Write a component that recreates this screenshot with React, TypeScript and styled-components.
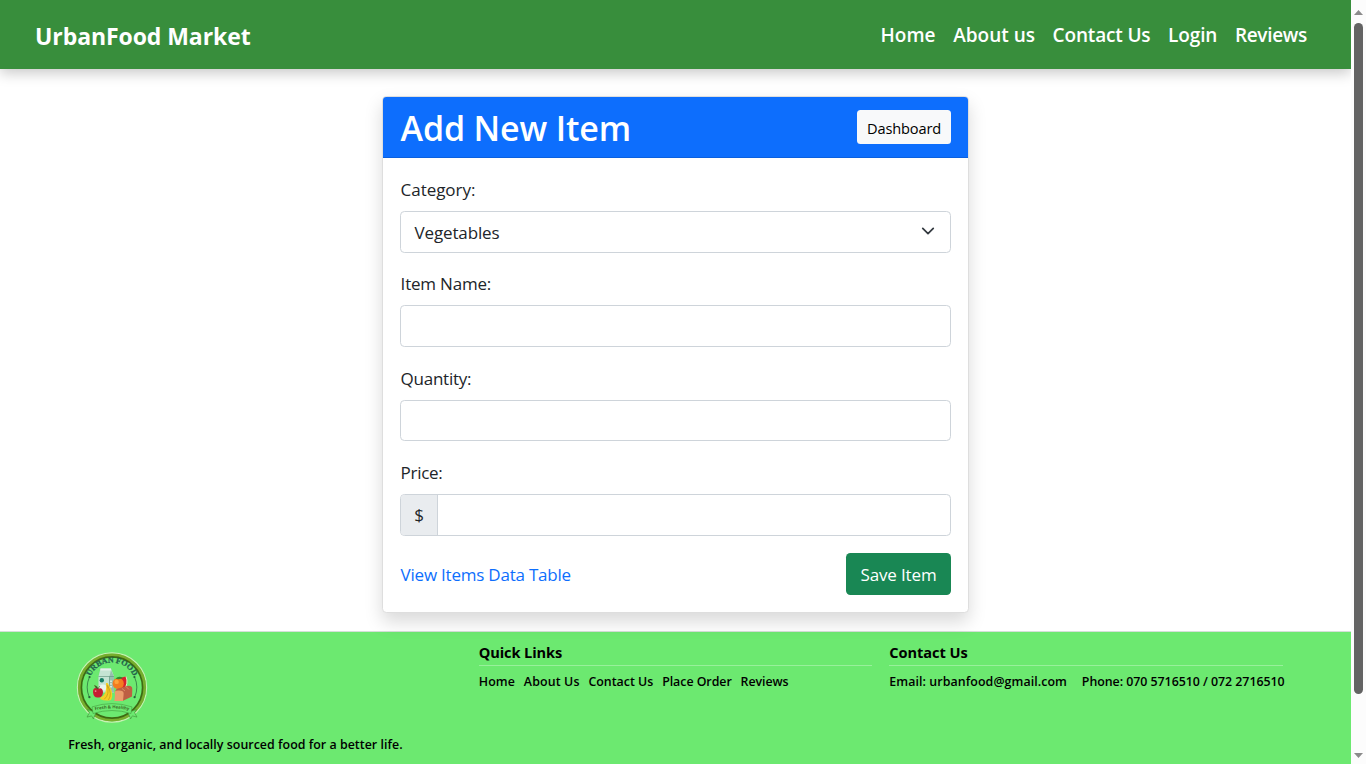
import React from "react";
import styled, { createGlobalStyle } from "styled-components";

const GlobalStyle = createGlobalStyle`
  *, *::before, *::after { box-sizing: border-box; }
  html, body { margin: 0; padding: 0; background: #fff; overflow: hidden; }
  body {
    font-family: "Open Sans", "Noto Sans", sans-serif;
    font-size: 17px;
    line-height: 26.4px;
    color: #212529;
  }
  h1, h2, h3, p { margin: 0; }
  a { text-decoration: none; color: inherit; }
`;

const Frame = styled.div`
  display: flex;
  width: 1366px;
  height: 764px;
  overflow: hidden;
`;

const Page = styled.div`
  display: flex;
  flex-direction: column;
  width: 1351px;
  overflow: hidden;
`;

const Navbar = styled.header`
  display: flex;
  flex: none;
  align-items: center;
  justify-content: space-between;
  height: 69px;
  padding: 0 44px 0 35px;
  background: #388e3c;
  color: #fff;
  box-shadow: 0 4px 13px rgba(0, 0, 0, 0.22);
`;

const Text = styled.span<{ $ls?: number }>`
  letter-spacing: ${(p) => p.$ls ?? 0}px;
  white-space: nowrap;
`;

const Brand = styled.a`
  font-size: 23px;
  font-weight: 700;
  line-height: 30px;
  padding-top: 3px;
`;

const NavLinks = styled.nav`
  display: flex;
  gap: 17.6px;
  font-size: 19px;
  font-weight: 600;
  line-height: 28px;
  padding-top: 1px;
`;

const Main = styled.main`
  display: flex;
  flex: none;
  justify-content: center;
  height: 562px;
  padding-top: 27px;
`;

const Card = styled.section`
  position: relative;
  width: 587px;
  height: 517.4px;
  border: 1px solid #dedede;
  border-radius: 4.4px;
  background: #fff;
  box-shadow: 0 8.8px 17.6px rgba(0, 0, 0, 0.15);
`;

const CardHeader = styled.div`
  display: flex;
  align-items: center;
  justify-content: space-between;
  height: 61px;
  padding: 0 17px 0 17.6px;
  border-bottom: 1px solid #0b60de;
  border-radius: 3.4px 3.4px 0 0;
  background: #0d6efd;
  color: #fff;
`;

const CardTitle = styled.h2`
  font-size: 34px;
  font-weight: 600;
  line-height: 42px;
  padding-top: 2px;
`;

const DashboardButton = styled.a`
  display: flex;
  align-items: center;
  justify-content: center;
  width: 94px;
  height: 34px;
  padding-top: 2px;
  border-radius: 3.5px;
  background: #f8f9fa;
  color: #000;
  font-size: 14.6px;
`;

const Form = styled.form`
  display: flex;
  flex-direction: column;
  padding: 17.6px 17px 17.6px 17.2px;
`;

const Field = styled.div`
  height: 94.4px;
`;

const Label = styled.label`
  display: block;
  height: 26.4px;
  margin-bottom: 8.8px;
  padding: 1.2px 0 0 0.4px;
`;

const Control = styled.div`
  height: 41.6px;
  border: 1px solid #ced4da;
  border-radius: 4.4px;
  background: #fff;
`;

const Select = styled(Control)`
  display: flex;
  align-items: center;
  justify-content: space-between;
  height: 42px;
  padding: 2px 15px 0 13.4px;

  svg {
    margin-bottom: 3px;
  }
`;

const InputGroup = styled(Control)`
  display: flex;
  overflow: hidden;
`;

const Addon = styled.span`
  display: flex;
  align-items: center;
  justify-content: center;
  width: 37px;
  padding-top: 1px;
  border-right: 1px solid #ced4da;
  background: #e9ecef;
`;

const Actions = styled.div`
  display: flex;
  align-items: center;
  justify-content: space-between;
`;

const TableLink = styled.a`
  color: #0d6efd;
  padding: 2px 0 0 0.4px;
`;

const SaveButton = styled.a`
  display: flex;
  align-items: center;
  justify-content: center;
  width: 105px;
  height: 41.6px;
  padding-top: 2px;
  border-radius: 4.4px;
  background: #198754;
  color: #fff;
`;

const Footer = styled.footer`
  display: grid;
  flex: none;
  grid-template-columns: repeat(3, 393.4px);
  column-gap: 17.2px;
  height: 133px;
  padding: 11px 0 0 68.2px;
  border-top: 1px solid #d5e0d8;
  background: #6ce970;
  color: #000;
  font-size: 12.4px;
  font-weight: 600;
  line-height: 20px;
`;

const Tagline = styled.p`
  margin-top: 3px;
`;

const FooterTitle = styled.h3`
  height: 23px;
  margin-bottom: 6px;
  border-bottom: 1px solid #98f09b;
  font-size: 14.6px;
  font-weight: 700;
  line-height: 19px;
`;

const FooterLinks = styled.div<{ $gap: number }>`
  display: flex;
  gap: ${(p) => p.$gap}px;
`;

const ScrollTrack = styled.div`
  display: flex;
  flex: none;
  flex-direction: column;
  align-items: center;
  width: 15px;
  padding: 10px 0 6px;
  background: #fcfcfc;
`;

const ScrollThumb = styled.div`
  width: 9px;
  height: 671px;
  margin: 8px 0 auto;
  border-radius: 4.5px;
  background: #636363;
`;

const ArrowIcon = styled.svg`
  display: block;
  width: 9px;
  height: 5px;
`;

const Arrow = ({ d }: { d: string }) => (
  <ArrowIcon viewBox="0 0 9 5">
    <path d={d} fill="#8b8b8b" />
  </ArrowIcon>
);

const LogoImage = styled.svg`
  display: block;
  width: 88px;
  height: 88px;
  margin-top: 1px;
`;

const Logo = () => (
  <LogoImage viewBox="-44 -43.5 88 88">
    <defs>
      <path id="arcTop" d="M-23 -3A23 22 0 0 1 23 -3" />
      <path id="arcBanner" d="M-19 23.2Q0 18.6 19 23.2" />
    </defs>
    <circle r="34.6" fill="none" stroke="#c9f0b4" strokeWidth="1.2" />
    <circle r="32.6" fill="none" stroke="#78ad2d" strokeWidth="3" />
    <circle r="30.6" fill="none" stroke="#3d6a12" strokeWidth="1.7" />
    <g fill="none" stroke="#2f7440" strokeWidth="0.8">
      <path d="M-22.6 -10.3A25 25 0 0 0 -22.8 9.5" />
      <path d="M22.6 -10.3A25 25 0 0 1 22.8 9.5" />
    </g>
    <g fill="#285f3a">
      <circle cx="-22.4" cy="-10.5" r="1.1" />
      <circle cx="22.4" cy="-10.5" r="1.1" />
      <circle cx="-22.6" cy="9.7" r="1.1" />
      <circle cx="22.6" cy="9.7" r="1.1" />
    </g>
    <text
      fill="#23634a"
      stroke="#23634a"
      strokeWidth="0.25"
      fontFamily="'Liberation Serif', serif"
      fontSize="8"
      fontWeight="700"
      textAnchor="middle"
    >
      <textPath href="#arcTop" startOffset="50%">
        URBAN FOOD
      </textPath>
    </text>
    {/* milk carton */}
    <path d="M-11.5 -19H-1L2 -11V5H-13.5V-11Z" fill="#c4e3d3" />
    <path d="M-11.5 -19H-1V-17H-11.5Z" fill="#e4efe9" />
    <path d="M-13.5 -11H-2.5L-1 -17.5L2 -11V5H-2.5V-11" fill="#97bfae" />
    <path d="M-13.5 -11H2M-2.5 -11V4" stroke="#5c8e7b" strokeWidth="0.6" fill="none" />
    <circle cx="-10.2" cy="-7.3" r="2.2" fill="#147d64" />
    <path d="M-12.8 -2Q-9 -4 -5 -1.5V3H-12.8Z" fill="#e8f5ee" />
    <path d="M-1 -7V0" stroke="#e8f5ee" strokeWidth="1.5" strokeDasharray="1.5 1.2" />
    {/* watermelon slice and orange */}
    <path d="M5 -9L14 -11Q16.5 -4 12 2L4 0Z" fill="#d9202b" />
    <path d="M14 -11Q16.8 -4 12 2" stroke="#e9e4c0" strokeWidth="1" fill="none" />
    <circle cx="6.2" cy="-4" r="5.6" fill="#f47b20" />
    <circle cx="4.6" cy="-5.6" r="2.2" fill="#ffa43a" />
    <path d="M3.5 -9Q7 -12 11 -9.5Q7 -7.5 3.5 -9Z" fill="#2f8a2d" />
    {/* bread */}
    <path d="M3.5 4Q3 1 8 0.5L15 -1.5Q20.5 -2.5 20.3 2L20 9L10.5 13.5H3Z" fill="#bd5f43" />
    <path d="M2.4 13.6L3 7Q1.5 3.2 6 3Q12.5 2.6 11.6 7L11 13.6Z" fill="#eb9d6b" />
    <path d="M10 1L13 3.5M14 -1L17 2" stroke="#dc8a66" strokeWidth="1" />
    {/* apple */}
    <path d="M-14 1.2Q-19 -1 -19 4.8Q-18.3 10.5 -14 10Q-9.5 10.5 -9 4.8Q-9.4 -0.8 -14 1.2Z" fill="#c51d32" />
    <path d="M-14 1.4Q-14.6 -1.4 -17.4 -2Q-16.6 0.6 -14 1.4L-12.2 -1.6" fill="#2c6b2a" stroke="#4d421d" strokeWidth="0.6" />
    <circle cx="-16.4" cy="3.6" r="0.9" fill="#ef8a93" />
    {/* bananas */}
    <path d="M-6 -4.5L-4.4 -4.6Q-2.2 -1.6 -0.4 3Q1 8.8 -1 12.4Q-6.4 14.2 -11.8 11.4L-11.4 9.8Q-4.6 7.4 -6 -4.5Z" fill="#f6cf25" />
    <path d="M-5 -2.8Q-1.8 7 -7.8 11.8M-4.3 -2Q0.6 7 -3.6 12.4" stroke="#b98c13" strokeWidth="0.6" fill="none" />
    {/* ribbon */}
    <path d="M-19 24L-24.5 22L-22.6 25.2L-25 29.6L-20.4 28.4L-18.6 31.4L-15.6 24Z" fill="#6ce970" stroke="#3c8f36" strokeWidth="0.6" />
    <path d="M19 24L24.5 22L22.6 25.2L25 29.6L20.4 28.4L18.6 31.4L15.6 24Z" fill="#6ce970" stroke="#3c8f36" strokeWidth="0.6" />
    <path d="M-20 19.4Q0 12.8 20 19.4L19 26Q0 20 -19 26Z" fill="#6ce970" stroke="#3c8f36" strokeWidth="0.5" />
    <text fill="#3a6b28" fontFamily="'Open Sans', sans-serif" fontSize="4.3" fontWeight="700" textAnchor="middle">
      <textPath href="#arcBanner" startOffset="50%">
        Fresh &amp; Healthy
      </textPath>
    </text>
  </LogoImage>
);

export default function App() {
  return (
    <>
      <GlobalStyle />
      <Frame>
        <Page>
          <Navbar>
            <Brand href="#"><Text $ls={-0.08}>UrbanFood Market</Text></Brand>
            <NavLinks>
              <a href="#"><Text>Home</Text></a>
              <a href="#"><Text>About us</Text></a>
              <a href="#"><Text $ls={-0.16}>Contact Us</Text></a>
              <a href="#"><Text $ls={-0.12}>Login</Text></a>
              <a href="#"><Text $ls={-0.3}>Reviews</Text></a>
            </NavLinks>
          </Navbar>
          <Main>
            <Card>
              <CardHeader>
                <CardTitle><Text $ls={-0.16}>Add New Item</Text></CardTitle>
                <DashboardButton href="#"><Text $ls={-0.15}>Dashboard</Text></DashboardButton>
              </CardHeader>
              <Form>
                <Field>
                  <Label><Text $ls={-0.04}>Category:</Text></Label>
                  <Select>
                    <Text $ls={-0.15}>Vegetables</Text>
                    <svg width="14" height="14" viewBox="0 0 16 16">
                      <path
                        d="M2 5l6 6 6-6"
                        fill="none"
                        stroke="#343a40"
                        strokeWidth="2"
                        strokeLinecap="round"
                        strokeLinejoin="round"
                      />
                    </svg>
                  </Select>
                </Field>
                <Field>
                  <Label><Text $ls={-0.2}>Item Name:</Text></Label>
                  <Control />
                </Field>
                <Field>
                  <Label><Text $ls={-0.25}>Quantity:</Text></Label>
                  <Control />
                </Field>
                <Field>
                  <Label><Text $ls={-0.3}>Price:</Text></Label>
                  <InputGroup>
                    <Addon>$</Addon>
                  </InputGroup>
                </Field>
                <Actions>
                  <TableLink href="#"><Text $ls={-0.22}>View Items Data Table</Text></TableLink>
                  <SaveButton href="#"><Text $ls={-0.15}>Save Item</Text></SaveButton>
                </Actions>
              </Form>
            </Card>
          </Main>
          <Footer>
            <div>
              <Logo />
              <Tagline><Text $ls={0.03}>Fresh, organic, and locally sourced food for a better life.</Text></Tagline>
            </div>
            <div>
              <FooterTitle><Text $ls={-0.12}>Quick Links</Text></FooterTitle>
              <FooterLinks $gap={8.8}>
                <a href="#"><Text $ls={0.1}>Home</Text></a>
                <a href="#"><Text $ls={0.14}>About Us</Text></a>
                <a href="#"><Text>Contact Us</Text></a>
                <a href="#"><Text $ls={-0.04}>Place Order</Text></a>
                <a href="#"><Text $ls={-0.06}>Reviews</Text></a>
              </FooterLinks>
            </div>
            <div>
              <FooterTitle><Text $ls={-0.06}>Contact Us</Text></FooterTitle>
              <FooterLinks $gap={14.8}>
                <Text $ls={0.08}>Email: urbanfood@gmail.com</Text>
                <Text $ls={-0.04}>Phone: 070 5716510 / 072 2716510</Text>
              </FooterLinks>
            </div>
          </Footer>
        </Page>
        <ScrollTrack>
          <Arrow d="M0 5L4.5 0L9 5Z" />
          <ScrollThumb />
          <Arrow d="M0 0L4.5 5L9 0Z" />
        </ScrollTrack>
      </Frame>
    </>
  );
}
